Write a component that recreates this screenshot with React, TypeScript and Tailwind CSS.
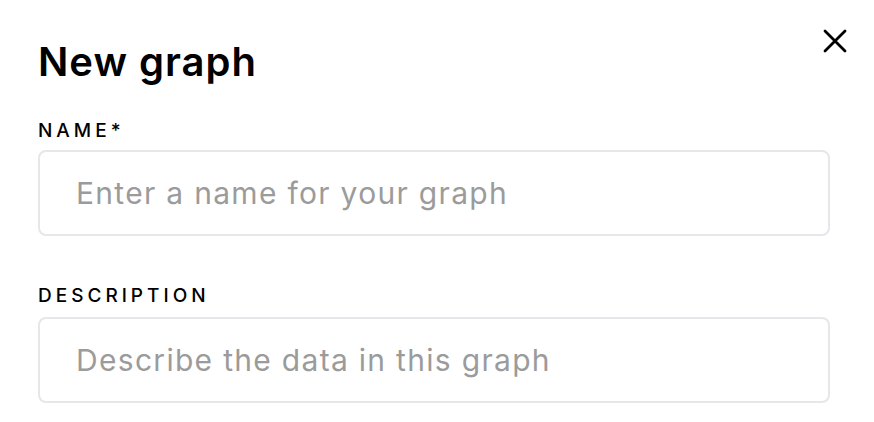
import React from "react";

export default function App() {
  return (
    <div className="relative w-[874px] h-[422px] bg-white overflow-hidden" style={{ fontFamily: "Inter, 'Noto Sans', sans-serif" }}>
      <button className="absolute left-[823px] top-[29px] w-[24px] h-[24px] flex items-center justify-center text-black" aria-label="Close">
        <svg width="24" height="24" viewBox="0 0 24 24" fill="none" stroke="currentColor" strokeWidth="2.8" strokeLinecap="round">
          <path d="M2 2 L22 22 M22 2 L2 22" />
        </svg>
      </button>
      <div className="flex flex-col pl-[38px] pt-[40px] w-[830px]">
        <h1 className="text-[40px] leading-[44px] font-semibold text-black tracking-[1px]">New graph</h1>
        <label className="mt-[36px] text-[19px] leading-[22px] font-medium tracking-[4px] text-black">NAME*</label>
        <input
          className="mt-[8px] h-[86px] w-[792px] rounded-[8px] border-2 border-[#e6e6eb] px-[36px] text-[30px] tracking-[1.3px] outline-none placeholder:text-[#9b9b9b]"
          placeholder="Enter a name for your graph"
        />
        <label className="mt-[49px] text-[19px] leading-[22px] font-medium tracking-[4px] text-black">DESCRIPTION</label>
        <input
          className="mt-[10px] h-[86px] w-[792px] rounded-[8px] border-2 border-[#e6e6eb] px-[36px] text-[30px] tracking-[1.3px] outline-none placeholder:text-[#9b9b9b]"
          placeholder="Describe the data in this graph"
        />
      </div>
    </div>
  );
}
